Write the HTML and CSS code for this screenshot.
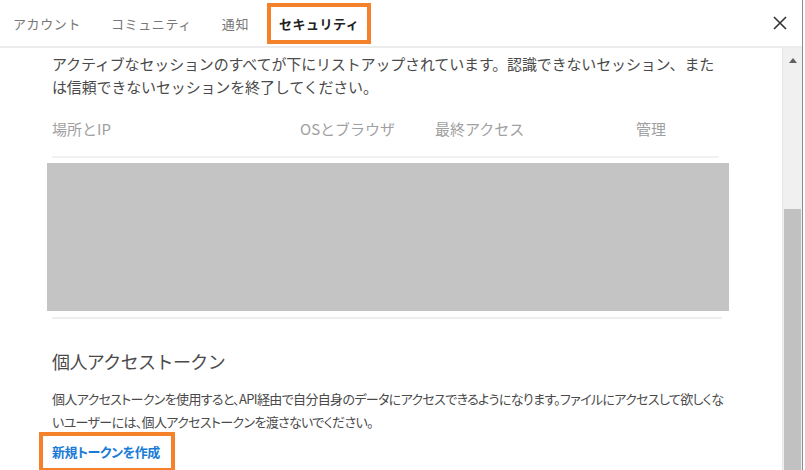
FILE: index.html
```html
<!DOCTYPE html>
<html lang="ja">
<head>
<meta charset="utf-8">
<title>設定 - セキュリティ</title>
<link rel="stylesheet" href="styles.css">
</head>
<body>

<div class="dialog">
	<header class="topbar">
		<nav class="tabs">
			<span class="tab">アカウント</span>
			<span class="tab">コミュニティ</span>
			<span class="tab">通知</span>
			<span class="tab active">セキュリティ</span>
		</nav>
		<button class="close" aria-label="閉じる">
			<svg width="16" height="16" viewBox="0 0 16 16"><path d="M2 2L14 14M14 2L2 14" stroke="#333" stroke-width="1.6" fill="none"/></svg>
		</button>
	</header>

	<div class="main">
		<div class="content">
			<p class="intro">アクティブなセッションのすべてが下にリストアップされています。認識できないセッション、または信頼できないセッションを終了してください。</p>

			<div class="session_head">
				<span>場所とIP</span>
				<span>OSとブラウザ</span>
				<span>最終アクセス</span>
				<span>管理</span>
			</div>
			<div class="session_list"></div>
			<div class="divider"></div>

			<h2 class="section_title">個人アクセストークン</h2>
			<p class="token_text">個人アクセストークンを使用すると、API経由で自分自身のデータにアクセスできるようになります。ファイルにアクセスして欲しくないユーザーには、個人アクセストークンを渡さないでください。</p>
			<a class="new_token" href="#">新規トークンを作成</a>
		</div>

		<div class="scrollbar">
			<div class="scroll_up"></div>
			<div class="scroll_thumb"></div>
		</div>
	</div>
</div>

</body>
</html>
```

FILE: styles.css
```css
html, body { margin: 0; padding: 0; background: #fff; }
body { font-family: "Noto Sans CJK JP", "Noto Sans", sans-serif; color: #4d4d4d; }

.dialog {
	width: 802px; height: 470px;
	border-right: 1px solid #8c8c8c;
	display: flex; flex-direction: column;
	overflow: hidden;
}

/* tabs */
.topbar {
	height: 46px;
	border-bottom: 2px solid #ececec;
	display: flex; align-items: center; justify-content: space-between;
	padding: 0 0 0 13px;
	flex-shrink: 0;
}
.tabs { display: flex; gap: 30px; align-items: center; }
.tab {
	font-size: 13px; line-height: 17px; letter-spacing: 0.6px;
	color: #777;
}
.tab.active {
	color: #222; font-weight: bold; letter-spacing: 0.5px;
	outline: 4px solid #f5822b; outline-offset: 8px;
}
.close {
	border: none; background: none; padding: 0;
	width: 16px; height: 16px; margin-right: 14px;
	display: flex;
}

/* body */
.main { flex: 1; display: flex; min-height: 0; }
.content {
	flex: 1;
	padding: 4px 61px 0 52px;
	overflow: hidden;
}
.intro {
	margin: 0;
	font-size: 15px; line-height: 23px; letter-spacing: -0.15px;
	color: #4a4a4a;
}

.session_head {
	margin: 9px 2px 0 0;
	padding: 10px 0 16px;
	border-bottom: 2px solid #f1f1f1;
	display: grid;
	grid-template-columns: 248px 135px 201px 1fr;
	font-size: 15px; line-height: 23px;
	color: #a0a0a0;
}
.session_list {
	margin: 5px -8px 0 -5px;
	height: 148px;
	background: #c4c4c4;
}
.divider {
	margin: 6px -1px 0 0;
	border-top: 2px solid #eeeeee;
}

.section_title {
	margin: 29px 0 0;
	font-size: 18px; line-height: 26px; font-weight: normal;
	letter-spacing: -0.6px;
	color: #4a4a4a;
}
.token_text {
	margin: 13px -4px 0 0;
	font-size: 13px; line-height: 23px; letter-spacing: -0.65px;
	font-feature-settings: "palt";
	color: #4a4a4a;
}
.new_token {
	display: inline-block;
	margin: 8px 0 0 -4px;
	padding: 1px 6px 1px 4px;
	font-size: 13px; line-height: 20px; font-weight: bold; letter-spacing: -0.4px;
	font-feature-settings: "palt";
	color: #1a7bd6; text-decoration: none;
	outline: 4px solid #f5822b; outline-offset: 5px;
}

/* fake scrollbar */
.scrollbar {
	width: 19px;
	background: #f0f0f0;
	border-left: 1px solid #e6e6e6;
	display: flex; flex-direction: column; align-items: center;
}
.scroll_up {
	margin-top: 10px;
	width: 0; height: 0;
	border-left: 4px solid transparent;
	border-right: 4px solid transparent;
	border-bottom: 5px solid #606060;
}
.scroll_thumb {
	margin-top: 146px;
	width: 17px; flex: 1;
	background: #c1c1c1;
}
```
